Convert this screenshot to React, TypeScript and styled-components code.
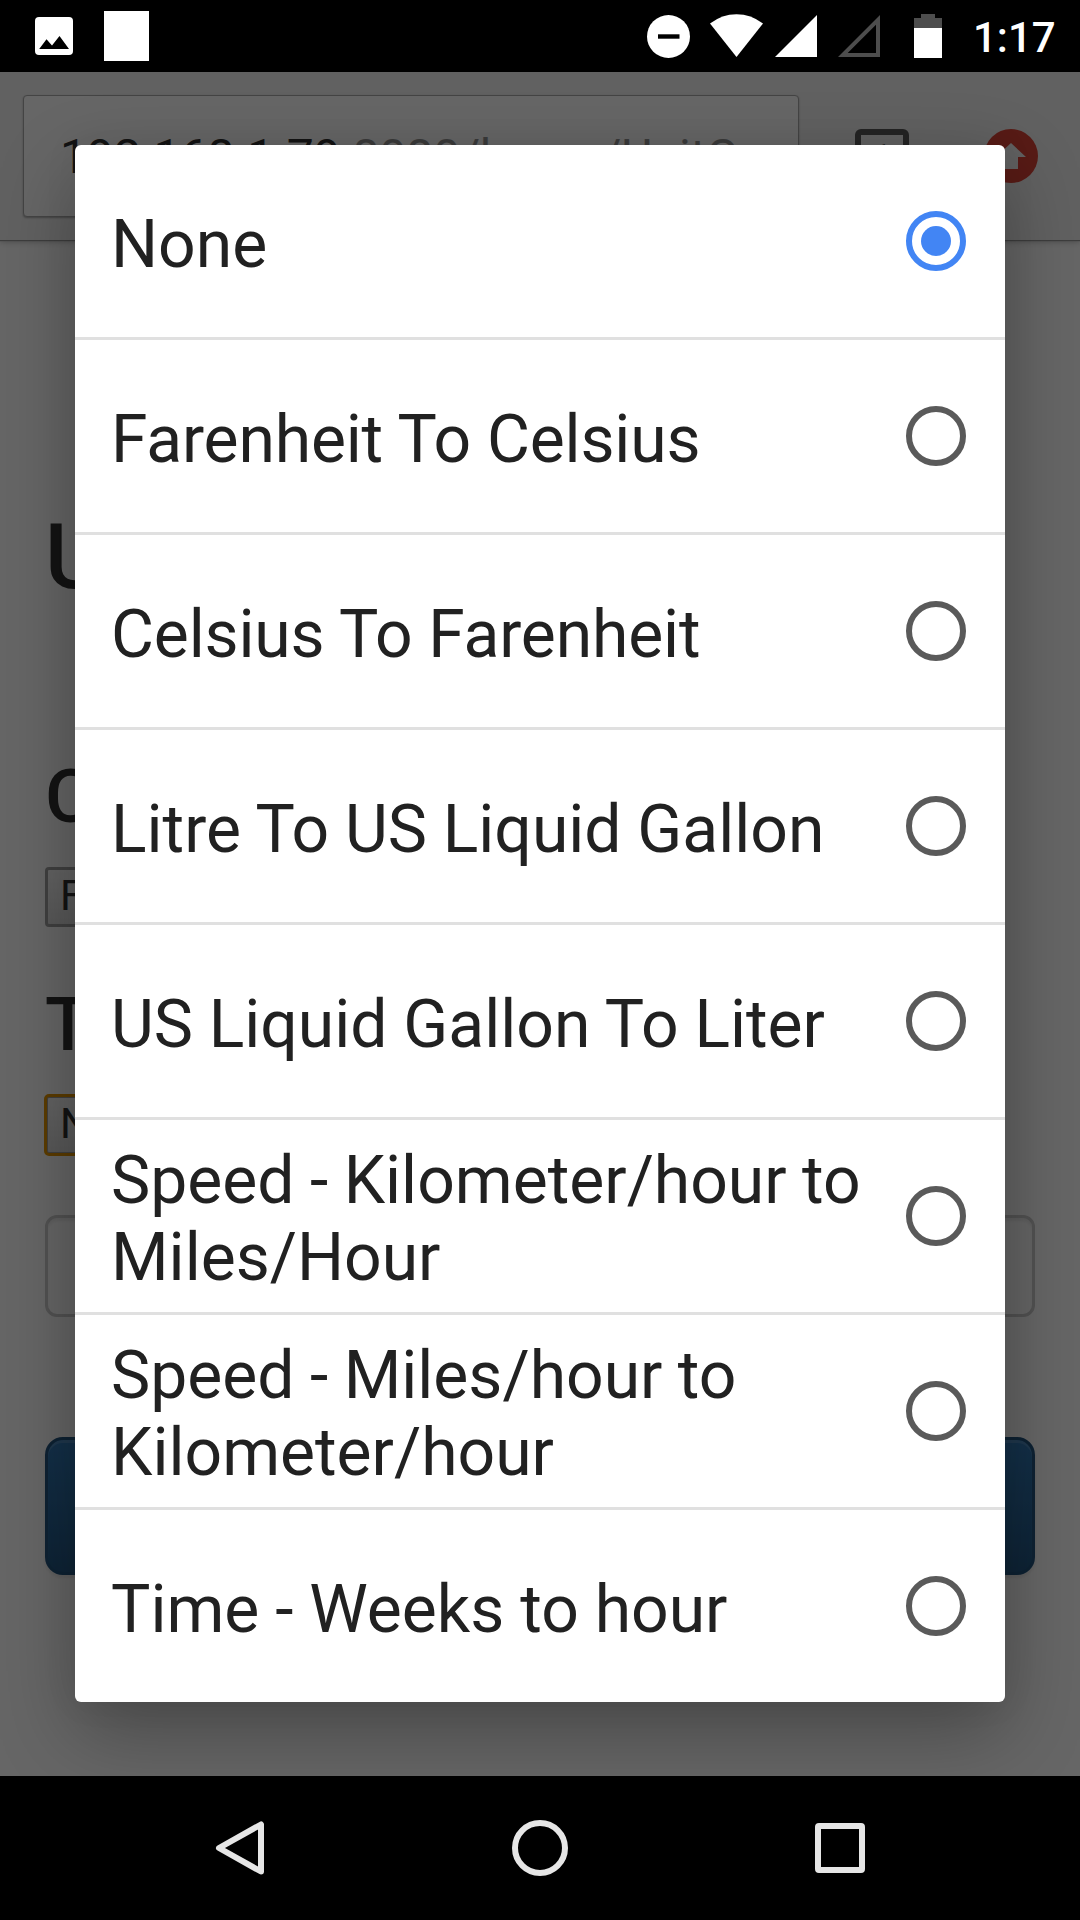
import React, { useState } from "react";
import styled, { createGlobalStyle } from "styled-components";

const GlobalStyle = createGlobalStyle`
  * { box-sizing: border-box; }
  html, body { margin: 0; padding: 0; background: #000; }
  body { font-family: Roboto, "Noto Sans", sans-serif; overflow: hidden; }
`;

const Screen = styled.div`
  width: 1080px;
  height: 1920px;
  display: flex;
  flex-direction: column;
  background: #000;
  overflow: hidden;
`;

const StatusBar = styled.header`
  height: 72px;
  flex: none;
  display: flex;
  justify-content: space-between;
  align-items: flex-start;
  padding: 0 25px 0 35px;
  background: #000;
  color: #fff;
`;

const StatusGroup = styled.div`
  display: flex;
  align-items: flex-start;
  height: 72px;
`;

const StatusIcon = styled.svg<{ $top: number; $gap: number }>`
  display: block;
  flex: none;
  margin-top: ${(p) => p.$top}px;
  margin-right: ${(p) => p.$gap}px;
`;

const BlankNotification = styled.div`
  width: 45px;
  height: 50px;
  margin-top: 11px;
  background: #fff;
`;

const Clock = styled.span`
  font-size: 42px;
  font-weight: 500;
  line-height: 48px;
  margin-top: 14px;
  width: 82px;
  white-space: nowrap;
`;

const Viewport = styled.main`
  position: relative;
  height: 1704px;
  flex: none;
  display: flex;
  flex-direction: column;
  background: #fff;
  overflow: hidden;
`;

const BrowserToolbar = styled.div`
  height: 168px;
  flex: none;
  display: flex;
  align-items: flex-start;
  padding: 23px 42px 0 23px;
  background: #f2f2f2;
  box-shadow: 0 1px 1px #999, 0 2px 6px rgba(0, 0, 0, 0.25);
`;

const AddressField = styled.div`
  width: 776px;
  height: 122px;
  display: flex;
  align-items: center;
  padding: 2px 38px 0 36px;
  border: 1px solid #aaa;
  border-radius: 4px;
  background: #fff;
  box-shadow: 0 1px 2px rgba(0, 0, 0, 0.3);
  font-size: 48px;
  line-height: 56px;
  color: #333;
  white-space: nowrap;
  overflow: hidden;
`;

const AddressPath = styled.span`
  color: #959595;
`;

const TabCounter = styled.div`
  width: 54px;
  height: 54px;
  margin: 34px 0 0 56px;
  display: flex;
  align-items: center;
  justify-content: center;
  padding-top: 2px;
  border: 6px solid #5a5a5a;
  border-radius: 6px;
  font-size: 33px;
  font-weight: 500;
  line-height: 40px;
  color: #5a5a5a;
`;

const UpdateBadge = styled.svg`
  display: block;
  margin: 34px 0 0 75px;
`;

const Form = styled.div`
  display: flex;
  flex-direction: column;
  align-items: flex-start;
  padding: 268px 45px 0;
  color: #333;
`;

const Title = styled.h1`
  margin: 0 0 148px;
  font-size: 90px;
  font-weight: 500;
  line-height: 99px;
`;

const FieldTitle = styled.h2`
  margin: 0 0 30px;
  font-size: 75px;
  font-weight: 500;
  line-height: 82px;
`;

const SelectBox = styled.div<{ $focused?: boolean; $gap: number }>`
  height: 60px;
  width: 480px;
  display: flex;
  align-items: center;
  margin-bottom: ${(p) => p.$gap}px;
  padding: 0 12px 2px;
  border: 3px solid #a0a0a0;
  border-radius: 4px;
  background: linear-gradient(to bottom, #f8f8f8, #dddddd);
  outline: ${(p) => (p.$focused ? "3px solid #e59700" : "none")};
  outline-offset: -2px;
  font-size: 42px;
  line-height: 50px;
  color: #333;
`;

const ValueInput = styled.div`
  width: 990px;
  height: 102px;
  margin-bottom: 120px;
  border: 3px solid #ccc;
  border-radius: 12px;
  box-shadow: inset 0 3px 3px rgba(0, 0, 0, 0.075);
`;

const SubmitButton = styled.div`
  width: 990px;
  height: 138px;
  border: 3px solid #245580;
  border-radius: 18px;
  background: linear-gradient(to bottom, #337ab7, #265a88);
  box-shadow: inset 0 3px 0 rgba(255, 255, 255, 0.15), 0 3px 3px rgba(0, 0, 0, 0.075);
`;

const Scrim = styled.div`
  position: absolute;
  inset: 0;
  padding: 73px 75px 74px;
  background: rgba(0, 0, 0, 0.6);
`;

const Dialog = styled.div`
  display: flex;
  flex-direction: column;
  height: 1557px;
  border-radius: 6px;
  background: #fff;
  box-shadow: 0 30px 80px rgba(0, 0, 0, 0.3), 0 0 36px rgba(0, 0, 0, 0.06);
  overflow: hidden;
`;

const OptionRow = styled.div`
  height: 195px;
  flex: none;
  display: flex;
  align-items: center;
  justify-content: space-between;
  padding: 0 39px 0 36px;
  border-bottom: 3px solid #e0e0e0;
  cursor: pointer;

  &:last-child {
    height: 192px;
    border-bottom: 0;
  }
`;

const OptionLabel = styled.span<{ $tracking: number; $wordGap: number }>`
  width: 760px;
  padding-top: 6px;
  font-size: 66px;
  line-height: 77px;
  letter-spacing: ${(p) => p.$tracking}px;
  word-spacing: ${(p) => p.$wordGap}px;
  color: #212121;
`;

const RadioRing = styled.span<{ $checked: boolean }>`
  width: 60px;
  height: 60px;
  flex: none;
  display: flex;
  align-items: center;
  justify-content: center;
  border: 6px solid ${(p) => (p.$checked ? "#4285f4" : "#5a5a5a")};
  border-radius: 50%;
`;

const RadioDot = styled.span`
  width: 30px;
  height: 30px;
  border-radius: 50%;
  background: #4285f4;
`;

const NavBar = styled.nav`
  height: 144px;
  flex: none;
  display: flex;
  align-items: center;
  justify-content: space-between;
  padding: 0 212px;
  background: #000;
`;

const NavIcon = styled.svg`
  display: block;
`;

const options = [
  { label: "None", tracking: 0, wordGap: 0 },
  { label: "Farenheit To Celsius", tracking: -0.16, wordGap: -0.4 },
  { label: "Celsius To Farenheit", tracking: -0.16, wordGap: -0.4 },
  { label: "Litre To US Liquid Gallon", tracking: 0, wordGap: -0.6 },
  { label: "US Liquid Gallon To Liter", tracking: 0, wordGap: -0.6 },
  { label: "Speed - Kilometer/hour to Miles/Hour", tracking: 0, wordGap: -0.9 },
  { label: "Speed - Miles/hour to Kilometer/hour", tracking: 0, wordGap: -0.9 },
  { label: "Time - Weeks to hour", tracking: 0, wordGap: -0.5 },
];

function StatusIcons() {
  return (
    <StatusBar>
      <StatusGroup>
        <StatusIcon $top={17} $gap={31} width="38" height="38" viewBox="0 0 38 38">
          <rect width="38" height="38" rx="4" fill="#fff" />
          <path d="M4.2 32 L11.5 22.3 L17 28.5 L24.5 19 L34 32Z" fill="#000" />
        </StatusIcon>
        <BlankNotification />
      </StatusGroup>
      <StatusGroup>
        <StatusIcon $top={15} $gap={20} width="43" height="43" viewBox="0 0 43 43">
          <circle cx="21.5" cy="21.5" r="21.5" fill="#fff" />
          <rect x="11" y="19.3" width="21.5" height="4.4" fill="#000" />
        </StatusIcon>
        <StatusIcon $top={14} $gap={12} width="53" height="43" viewBox="0 0 53 43">
          <path d="M0 9.5 Q12 0.2 26.5 0.2 T53 9.5 L26.5 43Z" fill="#fff" />
        </StatusIcon>
        <StatusIcon $top={15} $gap={21} width="42" height="42" viewBox="0 0 42 42">
          <path d="M42 0V42H0Z" fill="#fff" />
        </StatusIcon>
        <StatusIcon $top={15} $gap={34} width="42" height="42" viewBox="0 0 42 42">
          <path d="M42 0V42H0Z M38 9.7L9.7 38H38Z" fill="#4d4d4d" fillRule="evenodd" />
        </StatusIcon>
        <StatusIcon $top={14} $gap={31} width="28" height="44" viewBox="0 0 28 44">
          <path d="M7 0H21V4H28V14H0V4H7Z" fill="#4d4d4d" />
          <rect y="14" width="28" height="30" fill="#fff" />
        </StatusIcon>
        <Clock>1:17</Clock>
      </StatusGroup>
    </StatusBar>
  );
}

export default function App() {
  const [selected, setSelected] = useState(0);
  return (
    <>
      <GlobalStyle />
      <Screen>
        <StatusIcons />
        <Viewport>
          <BrowserToolbar>
            <AddressField>
              192.168.1.79<AddressPath>:8080/home/UnitC</AddressPath>
            </AddressField>
            <TabCounter>1</TabCounter>
            <UpdateBadge width="54" height="54" viewBox="0 0 54 54">
              <circle cx="27" cy="27" r="27" fill="#db4437" />
              <path d="M27 14L42 28H34V40H20V28H12Z" fill="#f2f2f2" />
            </UpdateBadge>
          </BrowserToolbar>
          <Form>
            <Title>U</Title>
            <FieldTitle>C</FieldTitle>
            <SelectBox $gap={56}>F</SelectBox>
            <FieldTitle>T</FieldTitle>
            <SelectBox $focused $gap={60}>N</SelectBox>
            <ValueInput />
            <SubmitButton />
          </Form>
          <Scrim>
            <Dialog role="radiogroup">
              {options.map(({ label, tracking, wordGap }, i) => (
                <OptionRow
                  key={label}
                  role="radio"
                  aria-checked={i === selected}
                  onClick={() => setSelected(i)}
                >
                  <OptionLabel $tracking={tracking} $wordGap={wordGap}>{label}</OptionLabel>
                  <RadioRing $checked={i === selected}>{i === selected && <RadioDot />}</RadioRing>
                </OptionRow>
              ))}
            </Dialog>
          </Scrim>
        </Viewport>
        <NavBar>
          <NavIcon width="56" height="56" viewBox="0 0 56 56">
            <path d="M49 4.5V51.5L7 28Z" fill="none" stroke="#e6e6e6" strokeWidth="6" strokeLinejoin="round" />
          </NavIcon>
          <NavIcon width="56" height="56" viewBox="0 0 56 56">
            <circle cx="28" cy="28" r="25" fill="none" stroke="#e6e6e6" strokeWidth="6" />
          </NavIcon>
          <NavIcon width="56" height="56" viewBox="0 0 56 56">
            <rect x="6" y="6" width="44" height="44" rx="1" fill="none" stroke="#e6e6e6" strokeWidth="6" strokeLinejoin="round" />
          </NavIcon>
        </NavBar>
      </Screen>
    </>
  );
}
